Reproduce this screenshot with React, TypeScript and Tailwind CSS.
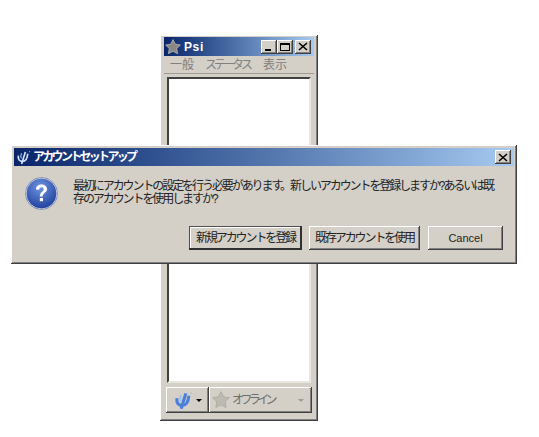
const FONT = "font-['Liberation_Sans','Noto_Sans_CJK_JP',sans-serif]";
const RAISED =
  "shadow-[inset_-1px_-1px_0_#404040,inset_1px_1px_0_#ffffff,inset_-2px_-2px_0_#808080,inset_2px_2px_0_#d4d0c8]";
const DEFAULT_RAISED =
  "shadow-[inset_-2px_-2px_0_#303030,inset_1px_1px_0_#505050,inset_2px_2px_0_#ffffff]";

function Star({ size, grey }: { size: number; grey?: boolean }) {
  return (
    <svg width={size} height={size} viewBox="0 0 16 16" className="shrink-0">
      <path
        d="M8 .6l2.3 4.6 5.100.8-3.700 3.500.9 5.200L8 12.300l-4.600 2.400.9-5.200L.6 6l5.100-.8z"
        fill={grey ? "#bdbab2" : "#8a8785"}
        stroke={grey ? "#aaa79f" : "#c9c6c0"}
        strokeWidth="0.7"
      />
    </svg>
  );
}

function PsiLogo({ size, color, accent, weight }: { size: number; color: string; accent: string; weight: number }) {
  return (
    <svg width={size} height={size} viewBox="0 0 16 16" fill="none" className="shrink-0">
      <path d="M2.500 6c-.6 4 1.200 6 4 6.200 3.400.2 5.600-3 6-8.200" stroke={color} strokeWidth={weight} />
      <path d="M10 2L6 15" stroke={color} strokeWidth={weight} />
      <path d="M6 3.500C4.800 5.500 5 7.500 5.800 9" stroke={accent} strokeWidth="1.400" />
      <path d="M14 1.500l.8.8" stroke={accent} strokeWidth="1.200" />
    </svg>
  );
}

function CaptionButton({ kind }: { kind: "min" | "max" | "close" }) {
  return (
    <div className={`flex h-3.5 w-4 items-center justify-center bg-[#d4d0c8] ${RAISED}`}>
      {kind === "min" && <div className="mt-[7px] -ml-0.5 h-0.5 w-1.5 bg-black" />}
      {kind === "max" && <div className="h-2 w-2.5 border border-t-2 border-black" />}
      {kind === "close" && (
        <svg width="10" height="9" viewBox="0 0 10 9" stroke="#000" strokeWidth="1.6">
          <path d="M1 1l8 7M9 1L1 8" />
        </svg>
      )}
    </div>
  );
}

function DialogButton({ label, active, width }: { label: string; active?: boolean; width: string }) {
  return (
    <div
      className={`flex h-6 items-center justify-center bg-[#d4d0c8] text-[#222] ${active ? DEFAULT_RAISED : RAISED} ${width}`}
    >
      {label}
    </div>
  );
}

function MainWindow() {
  return (
    <div className={`absolute top-[35px] left-[160px] flex h-[386px] w-[158px] flex-col bg-[#d4d0c8] px-1 pt-0.5 ${RAISED}`}>
      <div className="flex h-[19px] shrink-0 items-center justify-between bg-gradient-to-r from-[#0a246a] to-[#a6caf0] pr-[3px] pl-px">
        <div className="flex items-center gap-[3px]">
          <Star size={16} />
          <span className="text-[12px] font-bold tracking-[0.6px] text-white">Psi</span>
        </div>
        <div className="flex items-center">
          <CaptionButton kind="min" />
          <CaptionButton kind="max" />
          <div className="ml-0.5">
            <CaptionButton kind="close" />
          </div>
        </div>
      </div>
      <div className="flex h-[18px] shrink-0 items-center border-b border-[#a09c94] pl-[6px] text-[12px] text-[#808080]">
        <span>一般</span>
        <span className="ml-[11px] tracking-[-3px]">ステータス</span>
        <span className="ml-[13px]">表示</span>
      </div>
      <div className="mx-[3px] mt-[3px] h-[306px] shrink-0 border-2 border-t-[#404040] border-r-[#e8e6e0] border-b-[#e8e6e0] border-l-[#404040] bg-white" />
      <div className="mx-0.5 mt-[4px] flex h-[26px] shrink-0">
        <div className={`flex w-[43px] items-center justify-center gap-[3px] bg-[#d4d0c8] ${RAISED}`}>
          <PsiLogo size={19} color="#4a80dc" accent="#9cc0ee" weight={2.6} />
          <div className="h-0 w-0 border-x-[3px] border-t-[3px] border-x-transparent border-t-black" />
        </div>
        <div className={`flex flex-1 items-center gap-0.5 bg-[#d4d0c8] pr-2 pl-[3px] ${RAISED}`}>
          <Star size={18} grey />
          <span className="flex-1 text-[12px] tracking-[-3.6px] text-[#6e6e6e]">オフライン</span>
          <div className="h-0 w-0 border-x-[3px] border-t-[3px] border-x-transparent border-t-[#a09c94]" />
        </div>
      </div>
    </div>
  );
}

function Dialog() {
  return (
    <div className={`absolute top-[145px] left-[11px] flex h-[119px] w-[506px] flex-col bg-[#d4d0c8] p-[3px] ${RAISED}`}>
      <div className="flex h-[18px] shrink-0 items-center justify-between bg-gradient-to-r from-[#0a246a] to-[#a6caf0] pr-[3px] pl-[2px]">
        <div className="flex items-center gap-0.5">
          <PsiLogo size={15} color="#d6e4f8" accent="#8fb2e6" weight={1.8} />
          <span className="text-[12px] font-bold tracking-[-2.7px] text-white">アカウントセットアップ</span>
        </div>
        <CaptionButton kind="close" />
      </div>
      <div className="flex flex-1 flex-col">
        <div className="flex pt-[9px] pl-[11px]">
          <svg width="33" height="33" viewBox="0 0 33 33" className="mt-[2px] shrink-0">
            <defs>
              <radialGradient id="q" cx="45%" cy="30%" r="75%">
                <stop offset="0%" stopColor="#6f94e0" />
                <stop offset="100%" stopColor="#1a3a98" />
              </radialGradient>
            </defs>
            <circle cx="16.5" cy="16.5" r="15.5" fill="url(#q)" stroke="#e8ecf4" strokeWidth="1" />
            <circle cx="16.5" cy="16.5" r="16" fill="none" stroke="#6d7fa8" strokeWidth="0.8" />
            <path d="M11 12.500c0-3.200 2.500-5 5.500-5s5.500 1.800 5.500 4.500c0 3.800-4.200 3.800-4.200 7.500h-3c0-4.800 3.900-4.700 3.900-7.300 0-1.200-.9-2-2.200-2s-2.300.9-2.400 2.500z" fill="#fff" />
            <rect x="14.800" y="21" width="3.200" height="3.200" fill="#fff" />
          </svg>
          <p className="mt-[5px] ml-[15px] text-[12px] leading-[13px] tracking-[-2.08px] whitespace-nowrap text-[#222]">
            最初にアカウントの設定を行う必要があります。新しいアカウントを登録しますか?あるいは既
            <br />
            存のアカウントを使用しますか?
          </p>
        </div>
        <div className="mt-auto mr-[11px] mb-[11px] flex justify-end gap-[7px]">
          <DialogButton label="新規アカウントを登録" active width="w-[113px] text-[12px] tracking-[-2.1px]" />
          <DialogButton label="既存アカウントを使用" width="w-[111px] text-[12px] tracking-[-2.1px]" />
          <div className="ml-px">
            <DialogButton label="Cancel" width="w-[75px] text-[11px]" />
          </div>
        </div>
      </div>
    </div>
  );
}

export default function App() {
  return (
    <div className={`relative h-[437px] w-[539px] overflow-hidden bg-white ${FONT}`}>
      <MainWindow />
      <Dialog />
    </div>
  );
}
